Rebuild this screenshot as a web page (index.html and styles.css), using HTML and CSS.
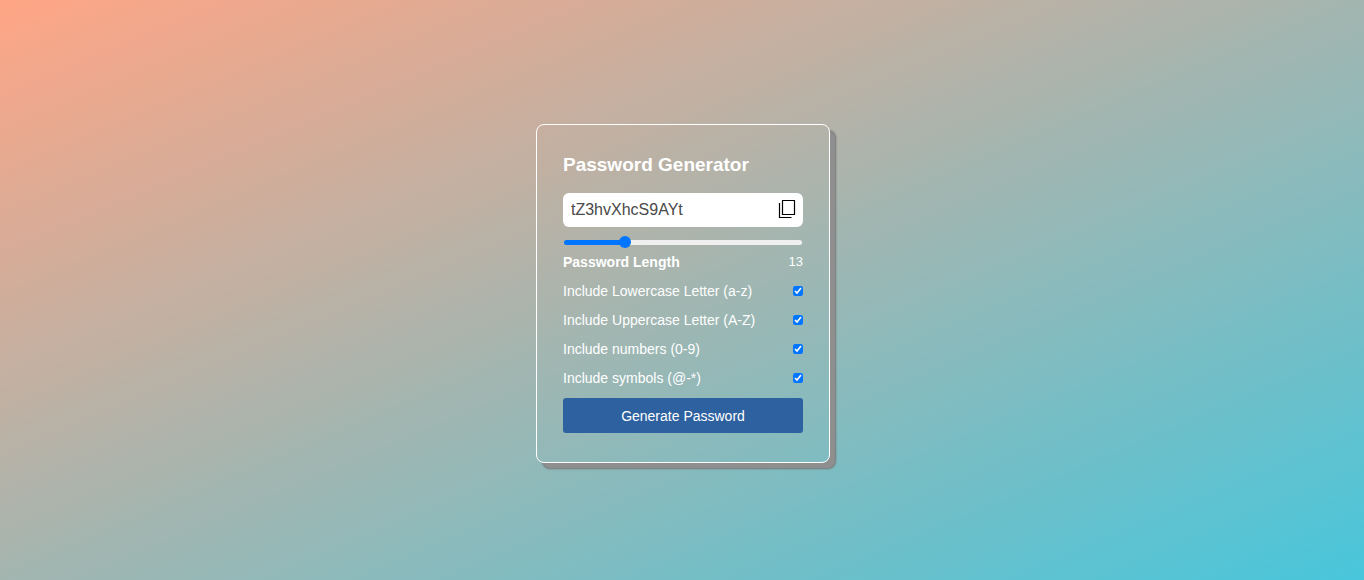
FILE: index.html
```html
<!DOCTYPE html>
<html lang="en">
<head>
<meta charset="utf-8">
<title>Password Generator</title>
<link rel="stylesheet" href="styles.css">
</head>
<body>
<main class="card">
  <h1 class="title">Password Generator</h1>
  <div class="password-box">
    <input class="password" type="text" aria-label="Generated password" value="tZ3hvXhcS9AYt" readonly>
    <button class="copy" type="button" aria-label="Copy password">
      <svg class="copy-icon" viewBox="0 0 18 20" aria-hidden="true">
        <path d="M4.5 1.5h12v14h-12zM1.5 4v14.5h12" fill="none" stroke="#000" stroke-width="1.2" stroke-linejoin="round"/>
      </svg>
    </button>
  </div>
  <input class="slider" id="length" type="range" min="1" max="50" value="13">
  <div class="row">
    <label class="length-label" for="length">Password Length</label>
    <output class="length-value" for="length">13</output>
  </div>
  <div class="row">
    <label for="lower">Include Lowercase Letter (a-z)</label>
    <input class="check" id="lower" type="checkbox" checked>
  </div>
  <div class="row">
    <label for="upper">Include Uppercase Letter (A-Z)</label>
    <input class="check" id="upper" type="checkbox" checked>
  </div>
  <div class="row">
    <label for="numbers">Include numbers (0-9)</label>
    <input class="check" id="numbers" type="checkbox" checked>
  </div>
  <div class="row">
    <label for="symbols">Include symbols (@-*)</label>
    <input class="check" id="symbols" type="checkbox" checked>
  </div>
  <button class="generate" type="button">Generate Password</button>
</main>
</body>
</html>
```
FILE: styles.css
```css
* {
  box-sizing: border-box;
  margin: 0;
  padding: 0;
}

body {
  display: flex;
  align-items: center;
  justify-content: center;
  min-height: 100vh;
  padding: 7px 0 0 2px;
  background: linear-gradient(to bottom right, #ffa585, #48c6db);
  color: #fff;
  font-family: "Liberation Sans", Arial, sans-serif;
  font-size: 14px;
}

.card {
  display: flex;
  flex-direction: column;
  width: 294px;
  padding: 29px 26px;
  border: 1px solid #fff;
  border-radius: 8px;
  box-shadow: 6px 6px 1px -1px #8f8f8f, 6px 6px 2px #757575;
}

.title {
  margin-bottom: 17px;
  font-size: 19px;
  line-height: 22px;
}

.password-box {
  display: flex;
  align-items: center;
  height: 34px;
  padding: 0 7px 0 8px;
  border-radius: 6px;
  background: #fff;
}

.password {
  flex: 1;
  min-width: 0;
  border: 0;
  outline: 0;
  background: transparent;
  color: #4a4a4a;
  font-family: inherit;
  font-size: 16px;
}

.copy {
  display: flex;
  padding-bottom: 2px;
  border: 0;
  background: transparent;
  cursor: pointer;
}

.copy-icon {
  width: 18px;
  height: 20px;
}

.slider {
  height: 12px;
  margin: 9px 0 6px;
  appearance: none;
  background: transparent;
}

.slider::-webkit-slider-runnable-track {
  height: 5px;
  margin: 0 1px;
  border-radius: 3px;
  background: linear-gradient(to right, #0075ff 25%, #efefef 25%);
}

.slider::-webkit-slider-thumb {
  width: 12px;
  height: 12px;
  margin-top: -4px;
  appearance: none;
  border-radius: 50%;
  background: #0075ff;
}

.row {
  display: flex;
  align-items: center;
  justify-content: space-between;
  margin-bottom: 13px;
  line-height: 16px;
}

.row:last-of-type {
  margin-bottom: 12px;
}

.length-label {
  font-weight: 700;
}

.length-value {
  font-size: 13px;
}

.check {
  width: 10px;
  height: 10px;
  accent-color: #0075ff;
}

.generate {
  height: 35px;
  border: 0;
  border-radius: 3px;
  background: #2d619f;
  color: #fff;
  font-family: inherit;
  font-size: 14px;
  cursor: pointer;
}
```
